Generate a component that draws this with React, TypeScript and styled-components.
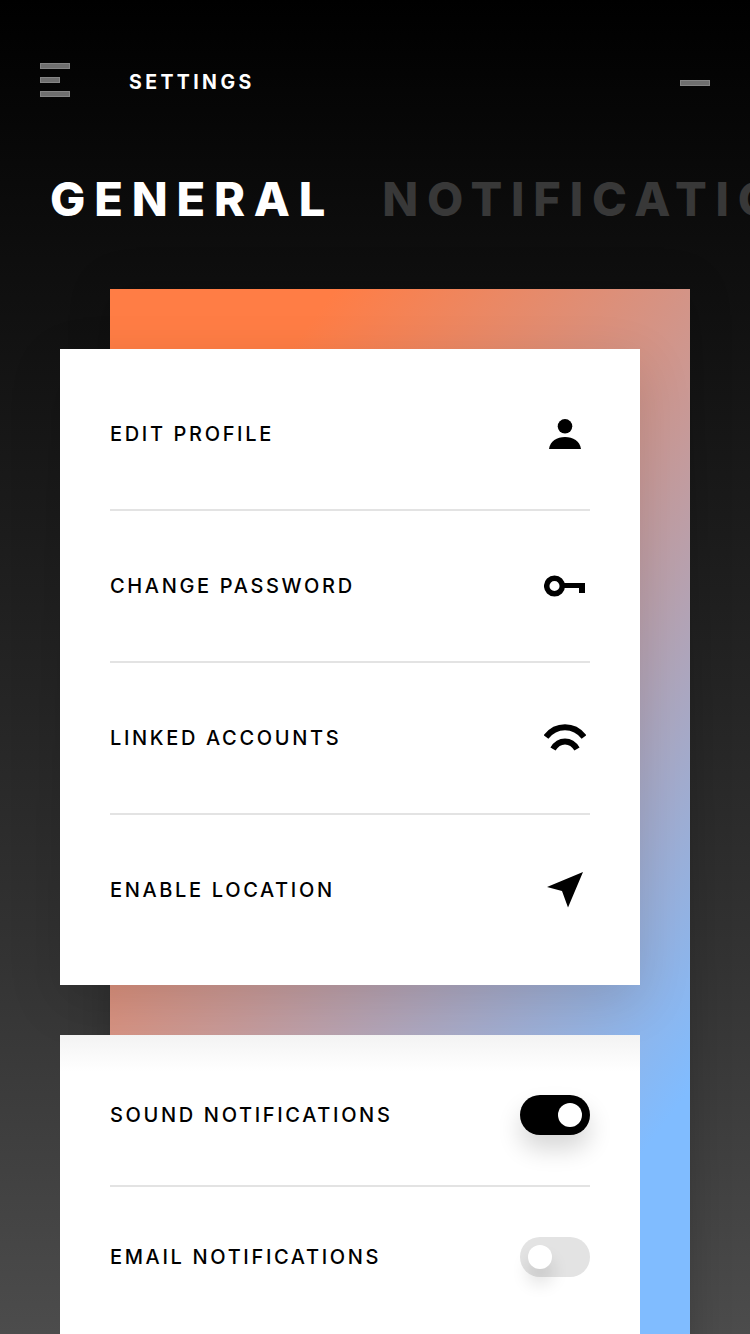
import React from "react";
import styled, { createGlobalStyle } from "styled-components";

const GlobalStyle = createGlobalStyle`
  html, body {
    margin: 0;
    padding: 0;
    background: #000;
  }
  body {
    font-family: Inter, "Liberation Sans", sans-serif;
  }
`;

const Page = styled.div`
  width: 750px;
  height: 1334px;
  overflow: hidden;
  background: linear-gradient(180deg, #000 0%, #0b0b0b 15%, #1c1c1c 40%, #333 72%, #4c4c4c 100%);
`;

const TopBar = styled.header`
  display: flex;
  align-items: center;
  height: 38px;
  padding: 63px 40px 0;
`;

const MenuIcon = styled.div`
  display: flex;
  flex-direction: column;
  align-items: flex-start;
  gap: 8px;
  width: 30px;
  margin-bottom: 4px;
`;

const Bar = styled.span<{ $w: number }>`
  display: block;
  width: ${(p) => p.$w}px;
  height: 6px;
  background: #6f6f6f;
  box-shadow: inset 0 0 0 1px #858585;
`;

const MinusBar = styled(Bar)`
  margin-top: 2px;
`;

const PageTitle = styled.h1`
  flex: 1;
  margin: 0 0 0 59px;
  font-size: 19.5px;
  font-weight: 700;
  letter-spacing: 3.4px;
  color: #fff;
`;

const Tabs = styled.nav`
  display: flex;
  gap: 48px;
  margin-top: 65px;
  padding-left: 50px;
  white-space: nowrap;
  overflow: hidden;
  height: 64px;
  align-items: center;
`;

const Tab = styled.span<{ $active?: boolean }>`
  font-size: 47px;
  font-weight: 800;
  letter-spacing: 8.8px;
  color: ${(p) => (p.$active ? "#fff" : "#383838")};
`;

const Panel = styled.section`
  margin: 59px 0 0 110px;
  width: 580px;
  height: 1100px;
  padding-top: 60px;
  box-sizing: border-box;
  background: linear-gradient(127deg, #ff7d45 16%, #c89a98 48%, #80bcff 84%);
  box-shadow: 0 0 40px rgba(0, 0, 0, 0.2);
`;

const Card = styled.div`
  position: relative;
  margin-left: -50px;
  width: 580px;
  box-sizing: border-box;
  padding: 10px 50px 18px;
  background: #fff;
  box-shadow: 0 16px 50px rgba(0, 0, 0, 0.13);
`;

const SecondCard = styled(Card)`
  margin-top: 50px;
  padding-bottom: 80px;
  background: linear-gradient(180deg, #f3f3f3 0%, #fff 36px);
  box-shadow: none;
`;

const Row = styled.div<{ $h: number }>`
  display: flex;
  align-items: center;
  justify-content: space-between;
  height: ${(p) => p.$h}px;
  box-sizing: border-box;
  border-bottom: 2px solid #e3e3e3;
  &:last-child {
    border-bottom: none;
    padding-bottom: 2px;
  }
`;

const Label = styled.span`
  font-size: 20px;
  font-weight: 500;
  letter-spacing: 2.65px;
  color: #000;
`;

const IconSlot = styled.div`
  display: flex;
  justify-content: center;
  width: 50px;
`;

const Toggle = styled.div<{ $on?: boolean }>`
  display: flex;
  align-items: center;
  justify-content: ${(p) => (p.$on ? "flex-end" : "flex-start")};
  width: 70px;
  height: 40px;
  padding: 0 8px;
  box-sizing: border-box;
  border-radius: 20px;
  background: ${(p) => (p.$on ? "#000" : "#e3e3e3")};
  box-shadow: ${(p) => (p.$on ? "0 14px 24px rgba(0, 0, 0, 0.16)" : "none")};
`;

const Knob = styled.span<{ $shadow?: boolean }>`
  display: block;
  width: 24px;
  height: 24px;
  border-radius: 50%;
  background: #fff;
  box-shadow: ${(p) => (p.$shadow ? "0 14px 18px rgba(0, 0, 0, 0.14)" : "none")};
`;

const UserIcon = () => (
  <svg width="32" height="30" viewBox="0 0 32 30">
    <circle cx="16" cy="7.3" r="7.3" />
    <path d="M0 30 C1 22 8 18 16 18 C24 18 31 22 32 30 Z" />
  </svg>
);

const KeyIcon = () => (
  <svg width="42" height="22" viewBox="0 0 42 22">
    <circle cx="10.5" cy="11" r="7.8" fill="none" stroke="#000" strokeWidth="5.5" />
    <path d="M18 8 H41 V18 H35 V13 H18 Z" />
  </svg>
);

const LinkIcon = () => (
  <svg width="42" height="28" viewBox="0 0 42 28">
    <path d="M2 13 C12 0 30 0 40 13" fill="none" stroke="#000" strokeWidth="6" />
    <path d="M9 25 C15 15 27 15 33 25" fill="none" stroke="#000" strokeWidth="6" />
  </svg>
);

const ArrowIcon = () => (
  <svg width="36" height="36" viewBox="0 0 36 36">
    <path d="M36 0 L21 35.5 L15 19 L0 15 Z" />
  </svg>
);

const generalRows = [
  { label: "EDIT PROFILE", icon: <UserIcon /> },
  { label: "CHANGE PASSWORD", icon: <KeyIcon /> },
  { label: "LINKED ACCOUNTS", icon: <LinkIcon /> },
  { label: "ENABLE LOCATION", icon: <ArrowIcon /> },
];

const App: React.FC = () => {
  return (
    <Page>
      <GlobalStyle />
      <TopBar>
        <MenuIcon>
          <Bar $w={30} />
          <Bar $w={20} />
          <Bar $w={30} />
        </MenuIcon>
        <PageTitle>SETTINGS</PageTitle>
        <MinusBar $w={30} />
      </TopBar>
      <Tabs>
        <Tab $active>GENERAL</Tab>
        <Tab>NOTIFICATIONS</Tab>
      </Tabs>
      <Panel>
        <Card>
          {generalRows.map((row) => (
            <Row key={row.label} $h={152}>
              <Label>{row.label}</Label>
              <IconSlot>{row.icon}</IconSlot>
            </Row>
          ))}
        </Card>
        <SecondCard>
          <Row $h={142}>
            <Label>SOUND NOTIFICATIONS</Label>
            <Toggle $on>
              <Knob />
            </Toggle>
          </Row>
          <Row $h={142}>
            <Label>EMAIL NOTIFICATIONS</Label>
            <Toggle>
              <Knob $shadow />
            </Toggle>
          </Row>
        </SecondCard>
      </Panel>
    </Page>
  );
};

export default App;
